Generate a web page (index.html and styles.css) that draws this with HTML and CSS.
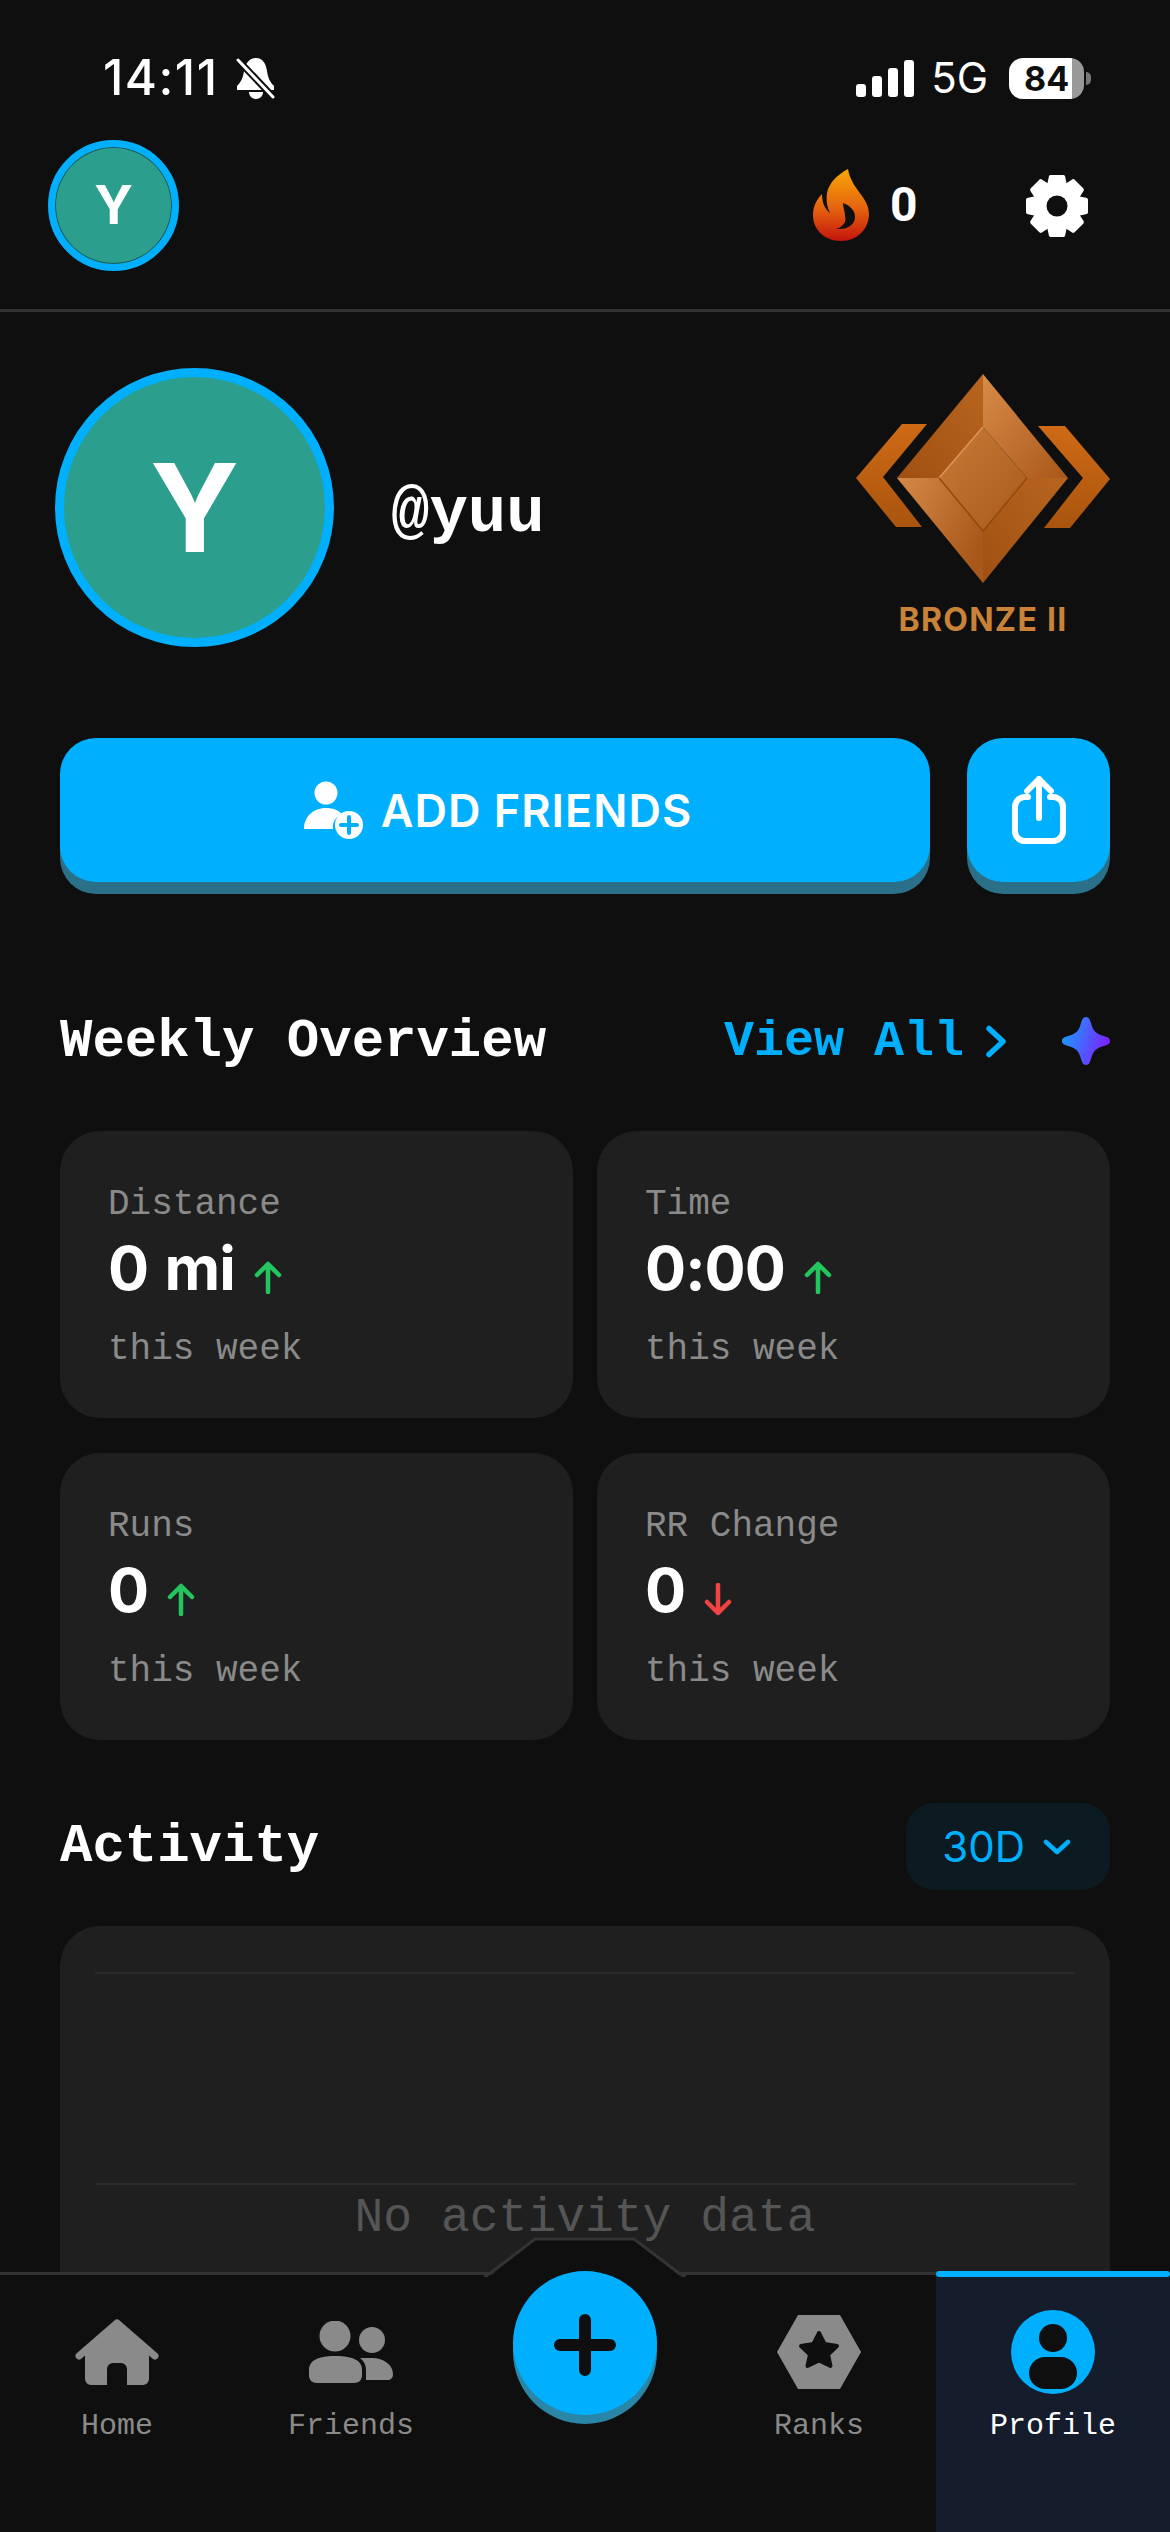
FILE: index.html
```html
<!DOCTYPE html>
<html lang="en">
<head>
<meta charset="utf-8">
<title>Profile</title>
<link rel="stylesheet" href="styles.css">
</head>
<body>
<div class="app">
  <div class="status">
    <span class="time">14:11</span>
    <svg class="bell" viewBox="0 0 39 41" width="39" height="41">
      <path fill="#fff" d="M20 0C13 0 9 6 8 13C7 20 5 24 1 28V32H38V28C34 24 32 20 31 13C30 6 27 0 20 0Z"/>
      <path fill="#fff" d="M13 34H27C27 38 24 41 20 41C16 41 13 38 13 34Z"/>
      <path stroke="#0f0f0f" stroke-width="7" d="M0 0L39 41"/>
      <path stroke="#fff" stroke-width="3" stroke-linecap="round" d="M2 2L37 39"/>
    </svg>
    <div class="status-right">
      <svg class="signal" viewBox="0 0 58 37" width="58" height="37">
        <rect x="0" y="24" width="10" height="13" rx="3" fill="#fff"/>
        <rect x="16" y="16" width="10" height="21" rx="3" fill="#fff"/>
        <rect x="32" y="8" width="10" height="29" rx="3" fill="#fff"/>
        <rect x="48" y="0" width="10" height="37" rx="3" fill="#fff"/>
      </svg>
      <span class="net">5G</span>
      <div class="battery"><span class="battery-num">84</span></div>
      <span class="battery-nub"></span>
    </div>
  </div>

  <header class="topbar">
    <div class="avatar-small">Y</div>
    <svg class="flame" viewBox="0 0 56 72" width="56" height="72">
      <defs>
        <linearGradient id="flameGrad" x1="0" y1="0" x2="0" y2="1">
          <stop offset="0" stop-color="#f9a805"/>
          <stop offset="0.55" stop-color="#e4620f"/>
          <stop offset="1" stop-color="#c4150d"/>
        </linearGradient>
      </defs>
      <path fill="url(#flameGrad)" d="M35 0C24 6 16 14 14 24C13 32 14 38 17 44C12 40 9 34 9 25C3 31 0 38 0 46C0 61 12 72 28 72C44 72 56 60 56 45C56 28 38 20 35 0Z"/>
      <path fill="#0f0f0f" d="M30 34C38 37 42 42 42 48C42 55 35 61 23 60C30 58 34 53 32 47C32 43 30 38 30 34Z"/>
    </svg>
    <span class="streak">0</span>
    <svg class="gear" viewBox="-31 -31 62 62" width="62" height="62">
      <g fill="#fff">
        <path id="tooth" d="M-8 -30a3 3 0 0 1 3 -1h10a3 3 0 0 1 3 1l3 14h-22z"/>
        <use href="#tooth" transform="rotate(45)"/>
        <use href="#tooth" transform="rotate(90)"/>
        <use href="#tooth" transform="rotate(135)"/>
        <use href="#tooth" transform="rotate(180)"/>
        <use href="#tooth" transform="rotate(225)"/>
        <use href="#tooth" transform="rotate(270)"/>
        <use href="#tooth" transform="rotate(315)"/>
        <circle r="23"/>
      </g>
      <circle r="10.5" fill="#0f0f0f"/>
    </svg>
  </header>

  <section class="profile">
    <div class="avatar-large">Y</div>
    <div class="username">@yuu</div>
    <div class="rank">
      <svg class="rank-badge" viewBox="856 374 254 209" width="254" height="209">
        <defs>
          <linearGradient id="chev" x1="0" y1="0" x2="0" y2="1">
            <stop offset="0" stop-color="#cf6a15"/>
            <stop offset="1" stop-color="#a9540f"/>
          </linearGradient>
          <linearGradient id="facetA" x1="0" y1="0" x2="1" y2="1">
            <stop offset="0" stop-color="#d98c49"/>
            <stop offset="1" stop-color="#a9571a"/>
          </linearGradient>
          <linearGradient id="facetB" x1="0" y1="0" x2="1" y2="0.6">
            <stop offset="0" stop-color="#d58a48"/>
            <stop offset="1" stop-color="#a8581a"/>
          </linearGradient>
          <linearGradient id="facetC" x1="0" y1="1" x2="1" y2="0">
            <stop offset="0" stop-color="#a05012"/>
            <stop offset="1" stop-color="#b8651f"/>
          </linearGradient>
          <linearGradient id="facetIn" x1="0" y1="0" x2="1" y2="1">
            <stop offset="0" stop-color="#c87a38"/>
            <stop offset="1" stop-color="#a85a1c"/>
          </linearGradient>
        </defs>
        <polygon fill="url(#chev)" points="902,424 927,424 883,477 922,527 896,527 856,478"/>
        <polygon fill="url(#chev)" points="1038,426 1065,426 1110,479 1070,528 1044,528 1083,478"/>
        <polygon fill="url(#facetC)" points="983,374 897,478 939,478 983,427"/>
        <polygon fill="url(#facetA)" points="983,374 1068,478 1027,478 983,427"/>
        <polygon fill="url(#facetB)" points="897,478 983,583 983,531 939,478"/>
        <polygon fill="url(#facetC)" points="1068,478 983,583 983,531 1027,478"/>
        <polygon fill="url(#facetIn)" points="983,427 1027,478 983,531 939,478"/>
        <path fill="none" stroke="#e0965a" stroke-width="1.5" d="M939 478L983 427"/>
        <path fill="none" stroke="#94490f" stroke-width="1.5" d="M939 478L983 531L1027 478"/>
      </svg>
      <div class="rank-name">BRONZE II</div>
    </div>
  </section>

  <div class="actions">
    <button class="btn btn-add">
      <svg viewBox="0 0 59 58" width="59" height="58">
        <circle cx="22" cy="12" r="11.5" fill="#fff"/>
        <path fill="#fff" d="M0 48C0 36 9 27 22 27C29 27 34 29 38 33C31 36 28 42 29 48Z"/>
        <circle cx="45" cy="44" r="14" fill="#fff"/>
        <path stroke="#00b0ff" stroke-width="4" stroke-linecap="round" d="M45 36V52M37 44H53"/>
      </svg>
      <span>ADD FRIENDS</span>
    </button>
    <button class="btn btn-share">
      <svg viewBox="0 0 54 68" width="54" height="68" fill="none" stroke="#fff" stroke-width="6" stroke-linecap="round" stroke-linejoin="round">
        <path d="M16 21H13A10 10 0 0 0 3 31V55A10 10 0 0 0 13 65H41A10 10 0 0 0 51 55V31A10 10 0 0 0 41 21H38"/>
        <path d="M27 42V3M15 15L27 3L39 15"/>
      </svg>
    </button>
  </div>

  <div class="section-head section-weekly">
    <h2 class="section-title">Weekly Overview</h2>
    <a class="view-all">View All
      <svg viewBox="0 0 20 33" width="20" height="33" fill="none" stroke="#00b0ff" stroke-width="5.5" stroke-linecap="round" stroke-linejoin="round"><path d="M3 3.5L17 16.5L3 29.5"/></svg>
    </a>
    <svg class="sparkle" viewBox="0 0 48 48" width="48" height="48">
      <defs>
        <linearGradient id="spark" x1="0" y1="0.3" x2="1" y2="0.6">
          <stop offset="0" stop-color="#1a9eff"/>
          <stop offset="1" stop-color="#7f1cff"/>
        </linearGradient>
      </defs>
      <path fill="url(#spark)" d="M24 0C27 0 28 3 29 6C31 14 34 17 42 19C45 20 48 21 48 24C48 27 45 28 42 29C34 31 31 34 29 42C28 45 27 48 24 48C21 48 20 45 19 42C17 34 14 31 6 29C3 28 0 27 0 24C0 21 3 20 6 19C14 17 17 14 19 6C20 3 21 0 24 0Z"/>
    </svg>
  </div>

  <div class="stats">
    <div class="card">
      <div class="card-label">Distance</div>
      <div class="card-value">0 mi<svg class="arrow" viewBox="0 0 28 33" width="28" height="33" fill="none" stroke="#22c55e" stroke-width="4.5" stroke-linecap="round" stroke-linejoin="round"><path d="M14 31V3M3 14L14 3L25 14"/></svg></div>
      <div class="card-note">this week</div>
    </div>
    <div class="card">
      <div class="card-label">Time</div>
      <div class="card-value">0:00<svg class="arrow" viewBox="0 0 28 33" width="28" height="33" fill="none" stroke="#22c55e" stroke-width="4.5" stroke-linecap="round" stroke-linejoin="round"><path d="M14 31V3M3 14L14 3L25 14"/></svg></div>
      <div class="card-note">this week</div>
    </div>
    <div class="card">
      <div class="card-label">Runs</div>
      <div class="card-value">0<svg class="arrow" viewBox="0 0 28 33" width="28" height="33" fill="none" stroke="#22c55e" stroke-width="4.5" stroke-linecap="round" stroke-linejoin="round"><path d="M14 31V3M3 14L14 3L25 14"/></svg></div>
      <div class="card-note">this week</div>
    </div>
    <div class="card">
      <div class="card-label">RR Change</div>
      <div class="card-value">0<svg class="arrow" viewBox="0 0 28 33" width="28" height="33" fill="none" stroke="#f04444" stroke-width="4.5" stroke-linecap="round" stroke-linejoin="round"><path d="M14 2V30M3 19L14 30L25 19"/></svg></div>
      <div class="card-note">this week</div>
    </div>
  </div>

  <div class="section-head section-activity">
    <h2 class="section-title">Activity</h2>
    <button class="range">30D
      <svg viewBox="0 0 28 16" width="28" height="16" fill="none" stroke="#00b0ff" stroke-width="4.5" stroke-linecap="round" stroke-linejoin="round"><path d="M3 3L14 13L25 3"/></svg>
    </button>
  </div>

  <div class="chart">
    <div class="grid-line grid-line-top"></div>
    <div class="grid-line grid-line-bottom"></div>
    <div class="chart-empty">No activity data</div>
  </div>

  <nav class="tabbar">
    <svg class="notch" viewBox="0 0 202 41" width="202" height="41">
      <path fill="#0f0f0f" d="M4 41L51 2H151L198 41Z"/>
      <path fill="none" stroke="#333" stroke-width="3" d="M0 38.5H3L51 2H150L198 38.5H202"/>
    </svg>
    <div class="tab">
      <div class="tab-icon">
        <svg viewBox="0 0 84 66" width="84" height="66">
          <path fill="none" stroke="#8a8a8a" stroke-width="7" stroke-linecap="round" stroke-linejoin="round" d="M4 37L42 4L80 37"/>
          <path fill="#8a8a8a" d="M10 34L42 6L74 34V60A6 6 0 0 1 68 66H52V50A6 6 0 0 0 46 44H38A6 6 0 0 0 32 50V66H16A6 6 0 0 1 10 60Z"/>
        </svg>
      </div>
      <span class="tab-label">Home</span>
    </div>
    <div class="tab">
      <div class="tab-icon">
        <svg viewBox="0 0 84 62" width="84" height="62" fill="#8a8a8a">
          <circle cx="26" cy="15" r="15.5"/>
          <circle cx="63" cy="19" r="13"/>
          <path d="M0 49C0 40 8 35 26 35C45 35 53 40 53 49V54C53 59 50 62 45 62H8C3 62 0 59 0 54Z"/>
          <path d="M51 37C54 37 58 37 63 37C75 37 84 44 84 53C84 57 82 59 78 59H57V49C57 44 55 40 51 37Z"/>
        </svg>
      </div>
      <span class="tab-label">Friends</span>
    </div>
    <div class="tab tab-spacer"></div>
    <div class="tab">
      <div class="tab-icon">
        <svg viewBox="0 0 84 74" width="84" height="74">
          <polygon fill="#8a8a8a" points="21,0 63,0 84,37 63,74 21,74 0,37"/>
          <polygon fill="#0f0f0f" stroke="#0f0f0f" stroke-width="4" stroke-linejoin="round" points="42,18 47.5,29 60,31 51,39.5 53.5,51 42,45.5 30.5,51 33,39.5 24,31 36.5,29"/>
        </svg>
      </div>
      <span class="tab-label">Ranks</span>
    </div>
    <div class="tab tab-active">
      <div class="tab-icon">
        <svg viewBox="0 0 84 84" width="84" height="84">
          <circle cx="42" cy="42" r="42" fill="#00b0ff"/>
          <circle cx="42" cy="28" r="14" fill="#0f0f0f"/>
          <rect x="18" y="47" width="48" height="32" rx="16" fill="#0f0f0f"/>
        </svg>
      </div>
      <span class="tab-label">Profile</span>
    </div>
    <button class="fab">
      <svg viewBox="0 0 62 62" width="62" height="62" fill="none" stroke="#0f0f0f" stroke-width="12" stroke-linecap="round"><path d="M31 6V56M6 31H56"/></svg>
    </button>
  </nav>
</div>
</body>
</html>
```

FILE: styles.css
```css
* { box-sizing: border-box; }
html, body { margin: 0; padding: 0; background: #0f0f0f; }
.app {
  position: relative;
  width: 1170px;
  height: 2532px;
  overflow: hidden;
  background: #0f0f0f;
  color: #fff;
  font-family: "Inter", "Liberation Sans", sans-serif;
}
svg { display: block; flex: none; }
button { border: 0; padding: 0; font: inherit; color: inherit; }

/* status bar */
.status {
  display: flex;
  align-items: center;
  height: 101px;
  padding: 55px 79px 0 103px;
}
.time {
  font-size: 49px;
  font-weight: 500;
  line-height: 46px;
  letter-spacing: 1.5px;
}
.bell { margin-left: 17px; }
.status-right { display: flex; align-items: center; margin-left: auto; }
.net { margin-left: 17px; font-size: 42px; line-height: 46px; font-weight: 400; }
.battery {
  display: flex;
  align-items: center;
  width: 75px;
  height: 41px;
  margin-left: 21px;
  padding-left: 15px;
  border-radius: 14px;
  background: linear-gradient(to right, #fff 84%, #999 84%);
}
.battery-num { color: #0f0f0f; font-size: 34px; font-weight: 700; line-height: 41px; }
.battery-nub {
  width: 5px;
  height: 13px;
  margin-left: 2px;
  border-radius: 0 5px 5px 0;
  background: #777;
}

/* header */
.topbar {
  display: flex;
  align-items: center;
  height: 211px;
  padding: 0 82px 0 48px;
  border-bottom: 3px solid #333;
}
.avatar-small {
  display: flex;
  align-items: center;
  justify-content: center;
  width: 131px;
  height: 131px;
  border: 7px solid #00b0ff;
  border-radius: 50%;
  background: #2c9e8e;
  box-shadow: inset 0 0 0 1px #185a60;
  font-size: 53px;
  font-weight: 700;
}
.flame { margin-left: auto; }
.streak {
  width: 30px;
  margin-left: 21px;
  font-family: "Roboto", sans-serif;
  font-size: 48px;
  font-weight: 700;
  line-height: 1;
}
.gear { margin-left: 106px; margin-top: 2px; }

/* profile */
.profile {
  display: flex;
  align-items: flex-start;
  padding: 56px 60px 0 55px;
}
.avatar-large {
  display: flex;
  align-items: center;
  justify-content: center;
  width: 279px;
  height: 279px;
  border: 9px solid #00b0ff;
  border-radius: 50%;
  background: #2c9e8e;
  font-size: 122px;
  font-weight: 700;
}
.username {
  margin: 106px 0 0 57px;
  font-family: "Liberation Mono", monospace;
  font-size: 64px;
  font-weight: 700;
  line-height: 80px;
}
.rank { display: flex; flex-direction: column; align-items: center; margin-left: auto; margin-top: 6px; }
.rank-name {
  margin-top: 15px;
  font-family: "Inter", sans-serif;
  font-size: 32px;
  font-weight: 700;
  line-height: 44px;
  letter-spacing: 1.3px;
  color: #c98238;
}

/* actions */
.actions {
  display: flex;
  gap: 37px;
  margin-top: 91px;
  padding: 0 60px;
}
.btn {
  display: flex;
  align-items: center;
  justify-content: center;
  height: 144px;
  border-radius: 36px;
  background: #00b0ff;
  box-shadow: 0 12px 0 #2a7088;
}
.btn-add { flex: 1; gap: 18px; padding-left: 6px; }
.btn-add span { font-size: 45px; font-weight: 600; letter-spacing: 1px; }
.btn-share { width: 143px; }

/* section heads */
.section-head { display: flex; align-items: center; height: 87px; padding: 0 60px; }
.section-weekly { margin-top: 116px; margin-bottom: 46px; }
.section-activity { margin-top: 63px; margin-bottom: 36px; }
.section-title {
  margin: 0;
  font-family: "Liberation Mono", monospace;
  font-size: 54px;
  font-weight: 700;
  line-height: 87px;
}
.view-all {
  display: flex;
  align-items: center;
  gap: 22px;
  margin-left: auto;
  font-family: "Liberation Mono", monospace;
  font-size: 50px;
  font-weight: 700;
  color: #00b0ff;
}
.sparkle { margin-left: 56px; margin-top: -2px; }

/* stat cards */
.stats {
  display: grid;
  grid-template-columns: 513px 513px;
  grid-auto-rows: 287px;
  column-gap: 24px;
  row-gap: 35px;
  padding: 0 60px;
}
.card {
  padding: 48px 48px 0;
  border-radius: 40px;
  background: #1f1f1f;
}
.card-label, .card-note {
  font-family: "Liberation Mono", monospace;
  font-size: 36px;
  line-height: 52px;
  color: #8a8a8a;
}
.card-value {
  display: flex;
  align-items: flex-end;
  height: 78px;
  margin-top: -2px;
  font-size: 61px;
  font-weight: 700;
  line-height: 78px;
  letter-spacing: -1px;
  word-spacing: 3px;
}
.arrow { margin: 0 0 13px 19px; }
.card-note { margin-top: 17px; }

/* range pill */
.range {
  display: flex;
  align-items: center;
  gap: 18px;
  height: 87px;
  margin-left: auto;
  padding: 0 39px 0 36px;
  border-radius: 28px;
  background: #0c1b22;
  font-size: 42px;
  font-weight: 400;
  color: #00b0ff;
}

/* chart */
.chart {
  height: 700px;
  margin: 0 60px;
  padding: 46px 35px 0;
  border-radius: 40px;
  background: #1f1f1f;
}
.grid-line { height: 2px; background: #2a2a2a; }
.grid-line-bottom { margin-top: 209px; background: #2d2d2d; }
.chart-empty {
  margin-top: 5px;
  font-family: "Liberation Mono", monospace;
  font-size: 48px;
  line-height: 56px;
  text-align: center;
  color: #555;
}

/* tab bar */
.tabbar {
  position: absolute;
  left: 0;
  right: 0;
  top: 2272px;
  bottom: 0;
  display: flex;
  border-top: 3px solid #333;
  background: #0f0f0f;
}
.notch { position: absolute; left: 484px; top: -38px; }
.tab {
  position: relative;
  display: flex;
  flex: 1;
  flex-direction: column;
  align-items: center;
  padding-top: 35px;
}
.tab-icon { display: flex; align-items: center; justify-content: center; height: 84px; }
.tab-label {
  margin-top: 12px;
  font-family: "Liberation Mono", monospace;
  font-size: 30px;
  line-height: 40px;
  color: #8a8a8a;
}
.tab-active { background: #151c2c; }
.tab-active::before {
  content: "";
  position: absolute;
  left: 0;
  right: 0;
  top: -4px;
  height: 6px;
  border-radius: 3px;
  background: #00b0ff;
}
.tab-active .tab-label { color: #fff; }
.fab {
  position: absolute;
  left: 513px;
  top: -4px;
  display: flex;
  align-items: center;
  justify-content: center;
  width: 144px;
  height: 144px;
  padding-top: 3px;
  border-radius: 50%;
  background: #00b0ff;
  box-shadow: 0 9px 0 #2a86a6;
}
```
